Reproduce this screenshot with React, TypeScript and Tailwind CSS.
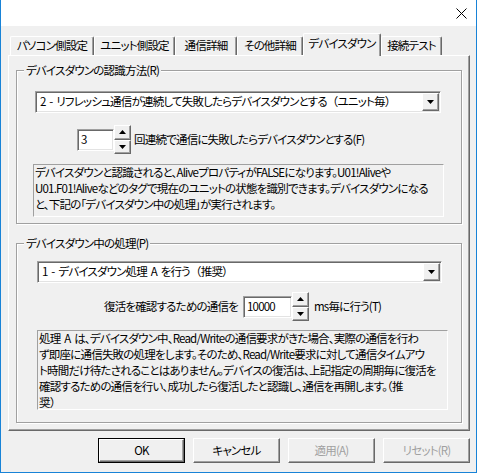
// Windows-style property dialog: "デバイスダウン" tab of a communication settings sheet.

const RAISED =
  "border border-t-white border-l-white border-r-[#696969] border-b-[#696969] shadow-[inset_-1px_-1px_0_#a0a0a0] bg-[#f0f0f0]";
const SUNKEN =
  "border border-t-[#a0a0a0] border-l-[#a0a0a0] border-r-white border-b-white shadow-[inset_1px_1px_0_#696969,inset_-1px_-1px_0_#e3e3e3]";

const TABS = [
  { label: "パソコン側設定", w: "w-[84px]" },
  { label: "ユニット側設定", w: "w-[81px]" },
  { label: "通信詳細", w: "w-[62px]" },
  { label: "その他詳細", w: "w-[66px]" },
  { label: "デバイスダウン", w: "w-[78px]", active: true },
  { label: "接続テスト", w: "w-[61px]" },
];

// full-width parentheses keep their full width (palt would squeeze them)
function fw(s: string) {
  return s.split(/([（）])/).map((part, i) =>
    part === "（" || part === "）" ? (
      <span key={i} className="[font-feature-settings:normal]">
        {part}
      </span>
    ) : (
      part
    )
  );
}

function Arrow({ dir }: { dir: "up" | "down" }) {
  return (
    <svg width="7" height="4" viewBox="0 0 7 4">
      <path d={dir === "up" ? "M3.5 0 7 4H0Z" : "M0 0h7L3.5 4Z"} fill="#000" />
    </svg>
  );
}

function Combo({ text, w }: { text: string; w: string }) {
  return (
    <div className={`${SUNKEN} ${w} h-[22px] p-px bg-white flex items-stretch`}>
      <div className="flex-1 flex items-center pl-[3px] whitespace-nowrap overflow-hidden">
        <span>{fw(text)}</span>
      </div>
      <div className={`${RAISED} w-[17px] grid place-items-center`}>
        <Arrow dir="down" />
      </div>
    </div>
  );
}

function Spin({ value, w }: { value: string; w: string }) {
  return (
    <div className="flex items-center">
      <div className={`${SUNKEN} ${w} h-[22px] bg-white flex items-center pl-[3px]`}>{value}</div>
      <div className="flex flex-col w-[17px] h-[29px]">
        <div className={`${RAISED} flex-1 grid place-items-center`}>
          <Arrow dir="up" />
        </div>
        <div className={`${RAISED} flex-1 grid place-items-center`}>
          <Arrow dir="down" />
        </div>
      </div>
    </div>
  );
}

function Group({ label, h, children }: { label: string; h: string; children: React.ReactNode }) {
  return (
    <div className={`relative ${h} border border-[#a0a0a0] shadow-[inset_1px_1px_0_#fff,1px_1px_0_#fff]`}>
      <span className="absolute left-[7px] top-[-9px] px-[2px] bg-[#f0f0f0] leading-[16px]">{label}</span>
      {children}
    </div>
  );
}

function Note({ lines, w, h }: { lines: string[]; w: string; h: string }) {
  return (
    <div className={`${w} ${h} border border-t-[#a0a0a0] border-l-[#a0a0a0] border-r-white border-b-white pl-px overflow-hidden`}>
      <div className="-mt-px leading-[16px]">
        {lines.map((l) => (
          <div key={l} className="whitespace-nowrap">
            {fw(l)}
          </div>
        ))}
      </div>
    </div>
  );
}

function Button({ label, disabled }: { label: string; disabled?: boolean }) {
  return (
    <div
      className={`${RAISED} w-[87px] h-[25px] grid place-items-center ${
        disabled ? "text-[#a0a0a0]" : "text-black"
      }`}
    >
      {label}
    </div>
  );
}

export default function App() {
  return (
    <div className="w-[477px] h-[473px] bg-[#f0f0f0] border-x border-b border-[#1883d7] text-[11.5px] tracking-[-0.8px] [word-spacing:2px] text-black font-['Noto_Sans_CJK_JP',sans-serif] [font-feature-settings:'palt'] flex flex-col select-none">
      {/* title bar */}
      <div className="h-[26px] bg-white flex justify-end items-center pr-[9px]">
        <svg width="11" height="11" viewBox="0 0 11 11">
          <path d="M0.5 0.5 10.5 10.5M10.5 0.5 0.5 10.5" stroke="#000" strokeWidth="1" />
        </svg>
      </div>

      {/* tab control */}
      <div className="ml-[7px] w-[462px] mt-[7px]">
        <div className="relative z-10 flex items-end h-[22px] pl-[2px]">
          {TABS.map((t) =>
            t.active ? (
              <div
                key={t.label}
                className={`${t.w} h-[23px] -mb-px bg-[#f0f0f0] border-t border-l border-r border-t-white border-l-white border-r-[#696969] shadow-[inset_-1px_0_0_#a0a0a0] rounded-t-[2px] flex items-center justify-center pb-[3px] whitespace-nowrap`}
              >
                {t.label}
              </div>
            ) : (
              <div
                key={t.label}
                className={`${t.w} h-[19px] border-t border-l border-r border-t-white border-l-white border-r-[#696969] shadow-[inset_-1px_0_0_#a0a0a0] rounded-t-[2px] flex items-center justify-center whitespace-nowrap`}
              >
                {t.label}
              </div>
            )
          )}
        </div>

        <div className="h-[376px] border border-t-white border-l-white border-r-[#696969] border-b-[#696969] shadow-[inset_-1px_-1px_0_#a0a0a0] pl-[7px] pt-[14px]">
          <div className="w-[446px]">
            <Group label="デバイスダウンの認識方法(R)" h="h-[154px]">
              <div className="flex flex-col pt-[20px]">
                <div className="pl-[18px]">
                  <Combo text="2 - リフレッシュ通信が連続して失敗したらデバイスダウンとする（ユニット毎）" w="w-[406px]" />
                </div>
                <div className="flex items-center mt-[12px] pl-[60px] gap-[3px]">
                  <Spin value="3" w="w-[37px]" />
                  <span className="whitespace-nowrap">回連続で通信に失敗したらデバイスダウンとする(F)</span>
                </div>
                <div className="mt-[10px] pl-[16px]">
                  <Note
                    w="w-[411px]"
                    h="h-[53px]"
                    lines={[
                      "デバイスダウンと認識されると、AliveプロパティがFALSEになります。U01!Aliveや",
                      "U01.F01!Aliveなどのタグで現在のユニットの状態を識別できます。デバイスダウンになる",
                      "と、下記の「デバイスダウン中の処理」が実行されます。",
                    ]}
                  />
                </div>
              </div>
            </Group>

            <div className="mt-[19px]">
              <Group label="デバイスダウン中の処理(P)" h="h-[180px]">
                <div className="flex flex-col pt-[17px]">
                  <div className="pl-[20px]">
                    <Combo text="1 - デバイスダウン処理 A を行う（推奨）" w="w-[405px]" />
                  </div>
                  <div className="flex items-center mt-[9px] pl-[66px]">
                    <span className="w-[160px] text-right whitespace-nowrap pr-[5px]">復活を確認するための通信を</span>
                    <Spin value="10000" w="w-[49px]" />
                    <span className="ml-[5px] whitespace-nowrap">ms毎に行う(T)</span>
                  </div>
                  <div className="mt-[9px] pl-[20px]">
                    <Note
                      w="w-[411px]"
                      h="h-[80px]"
                      lines={[
                        "処理 A は、デバイスダウン中、Read/Writeの通信要求がきた場合、実際の通信を行わ",
                        "ず即座に通信失敗の処理をします。そのため、Read/Write要求に対して通信タイムアウ",
                        "ト時間だけ待たされることはありません。デバイスの復活は、上記指定の周期毎に復活を",
                        "確認するための通信を行い、成功したら復活したと認識し、通信を再開します。（推",
                        "奨）",
                      ]}
                    />
                  </div>
                </div>
              </Group>
            </div>
          </div>
        </div>
      </div>

      {/* dialog buttons */}
      <div className="ml-[7px] w-[462px] mt-[7px] flex justify-end gap-[8px]">
        <div className="border border-black">
          <div className="w-[85px] h-[23px] border border-t-white border-l-white border-r-[#696969] border-b-[#696969] shadow-[inset_-1px_-1px_0_#a0a0a0] bg-[#f0f0f0] grid place-items-center">
            OK
          </div>
        </div>
        <Button label="キャンセル" />
        <Button label="適用(A)" disabled />
        <Button label="リセット(R)" disabled />
      </div>
    </div>
  );
}
